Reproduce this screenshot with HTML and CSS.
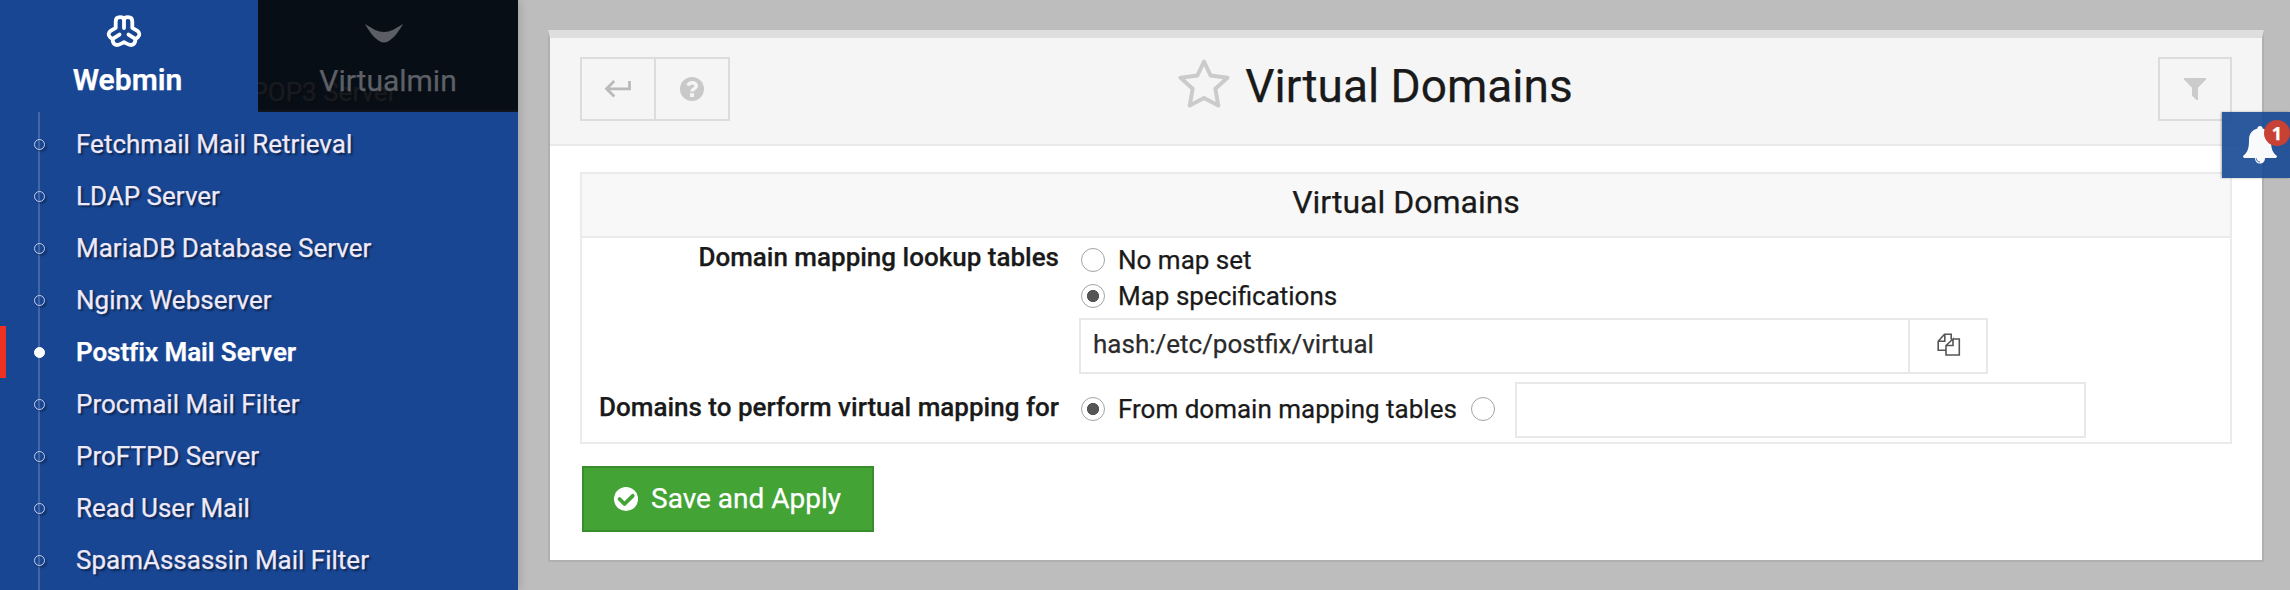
FILE: index.html
```html
<!DOCTYPE html>
<html lang="en">
<head>
<meta charset="utf-8">
<title>Virtual Domains</title>
<link rel="stylesheet" href="styles.css">
</head>
<body>
<div class="app">
  <aside class="sidebar">
    <nav class="tabs">
      <a class="tab tab-active">
        <svg class="tab-icon" width="36" height="34" viewBox="0 0 36 34" fill="none" stroke="#fff" stroke-width="3.8" stroke-linecap="round" stroke-linejoin="round">
          <path d="M18 14V6.500C18 4 16 3.200 14 3.200C11 3.200 9.700 4.800 9.700 7.500V13.800L4.600 16.800C2.200 18.400 2 21.500 4.100 23.200C5.100 24 6.200 24.200 6.500 25.500C6.800 28.500 7.500 30.700 10.800 31C13 31.100 15.500 29.500 18 28.200C20.500 29.500 23 31.100 25.200 31C28.500 30.700 29.200 28.500 29.500 25.500C29.800 24.200 30.900 24 31.900 23.200C34 21.500 33.800 18.400 31.400 16.800L26.300 13.800V7.500C26.300 4.800 25 3.200 22 3.200C20 3.200 18 4 18 6.500"/>
          <path d="M13.500 20.600L7.500 24.300M22.500 20.600L28.500 24.300"/>
        </svg>
        <span>Webmin</span>
      </a>
      <a class="tab tab-dim">
        <svg class="tab-icon" width="38" height="34" viewBox="0 0 38 34" fill="#5b5e64">
          <path d="M0 10C8 15 13 18 19 18C25 18 30 15 38 10C33.500 18 29 24 23.500 27.200C20.500 28.900 17.500 28.900 14.500 27.200C9 24 4.500 18 0 10Z"/>
        </svg>
        <span>Virtualmin</span>
      </a>
    </nav>
    <ul class="menu">
      <li class="item"><i class="dot"></i>Dovecot IMAP/POP3 Server</li>
      <li class="item"><i class="dot"></i>Fetchmail Mail Retrieval</li>
      <li class="item"><i class="dot"></i>LDAP Server</li>
      <li class="item"><i class="dot"></i>MariaDB Database Server</li>
      <li class="item"><i class="dot"></i>Nginx Webserver</li>
      <li class="item item-active"><i class="dot"></i>Postfix Mail Server</li>
      <li class="item"><i class="dot"></i>Procmail Mail Filter</li>
      <li class="item"><i class="dot"></i>ProFTPD Server</li>
      <li class="item"><i class="dot"></i>Read User Mail</li>
      <li class="item"><i class="dot"></i>SpamAssassin Mail Filter</li>
    </ul>
  </aside>

  <main class="content">
    <section class="panel">
      <header class="panel-head">
        <div class="tools">
          <button class="tool" aria-label="Return">
            <svg width="28" height="18" viewBox="0 0 28 18" fill="none" stroke="#bababa" stroke-width="2.8"><path d="M25.500 1V8.800H3M10.300 1L2.500 8.800L10.300 16.600"/></svg>
          </button>
          <button class="tool" aria-label="Help">
            <svg width="24" height="24" viewBox="0 0 24 24"><circle cx="12" cy="12" r="12" fill="#c9c9c9"/><path d="M7.800 8.500C8.700 6.400 10.200 5.700 12.200 5.700C14.500 5.700 16.300 7 16.300 9C16.300 12 12 11.600 12 14.600" fill="none" stroke="#f5f5f5" stroke-width="3.5"/><rect x="10" y="16.200" width="4" height="3.800" fill="#f5f5f5"/></svg>
          </button>
        </div>
        <h1 class="title">
          <svg width="52" height="51" viewBox="0 0 52 51" fill="none" stroke="#cbcbcb" stroke-width="4" stroke-linejoin="round"><path d="M26 3.500L32.600 17.500L49.500 19.700L37.300 30.700L40.300 47.500L26 39.900L11.700 47.500L14.700 30.700L2.500 19.700L19.400 17.500Z"/></svg>
          <span>Virtual Domains</span>
        </h1>
        <button class="tool" aria-label="Filter">
          <svg width="22" height="22" viewBox="0 0 22 22" fill="#cbcbcb"><path d="M0 0H22V1.500L14 9.800V22H12.500L8 17.800V9.800L0 1.500Z"/></svg>
        </button>
      </header>

      <div class="panel-body">
        <div class="box">
          <h2 class="box-head">Virtual Domains</h2>
          <div class="row row-tables">
            <div class="label">Domain mapping lookup tables</div>
            <div class="field">
              <label class="option"><i class="radio"></i>No map set</label>
              <label class="option"><i class="radio radio-on"></i>Map specifications</label>
              <div class="input-group">
                <div class="input input-map">hash:/etc/postfix/virtual</div>
                <button class="copy" aria-label="Choose map">
                  <svg width="24" height="24" viewBox="0 0 24 24" fill="none" stroke="#555" stroke-width="1.600"><path d="M9 17.300H1.200V8.200L7.500 1.200H14.200V6.500M7.800 1.500V8.200H1.500M16 6H22.300V22H9V12.500L16 6V12.500H9"/></svg>
                </button>
              </div>
            </div>
          </div>
          <div class="row row-domains">
            <div class="label">Domains to perform virtual mapping for</div>
            <div class="field field-inline">
              <label class="option"><i class="radio radio-on"></i>From domain mapping tables</label>
              <i class="radio"></i>
              <div class="input input-domains"></div>
            </div>
          </div>
        </div>
        <button class="save">
          <svg width="24" height="24" viewBox="0 0 24 24"><circle cx="12" cy="12" r="12" fill="#fff"/><path d="M5.500 12L10.500 17L18.700 8.800" fill="none" stroke="#43a335" stroke-width="3.800" stroke-linecap="round" stroke-linejoin="round"/></svg>
          <span>Save and Apply</span>
        </button>
      </div>
    </section>
  </main>

  <div class="notify">
    <svg class="bell" width="34" height="38" viewBox="0 0 34 38"><path fill="#fff" fill-opacity=".97" d="M17 0C18.600 0 19.600 1 19.600 2.600C25 4 28 8 28 14C28 23 29.500 26.500 34 30C34 31.500 33 32 32 32H22C22 35.500 20 37.500 17 37.500C14 37.500 12 35.500 12 32H2C1 32 0 31.500 0 30C4.500 26.500 6 23 6 14C6 8 9 4 14.400 2.600C14.400 1 15.400 0 17 0Z"/><path d="M13.300 32.300C13.500 34.500 14.800 35.900 17 36" fill="none" stroke="#2b579c" stroke-width=".9"/></svg>
    <span class="badge">1</span>
  </div>
</div>
</body>
</html>
```
FILE: styles.css
```css
* {
  box-sizing: border-box;
}

body {
  margin: 0;
  background: #bdbdbd;
  color: #1a1a1a;
  font-family: Roboto, "Liberation Sans", sans-serif;
  font-size: 26px;
  -webkit-text-stroke: 0.25px currentColor;
}

button {
  margin: 0;
  padding: 0;
  border: 0;
  border-radius: 0;
  background: transparent;
  font: inherit;
}

svg {
  display: block;
  flex: none;
}

.app {
  position: relative;
  display: flex;
  width: 2290px;
  height: 590px;
  overflow: hidden;
}

/* Sidebar */
.sidebar {
  position: relative;
  flex: none;
  width: 518px;
  background: #184693;
  box-shadow: 2px 0 8px rgba(0, 0, 0, 0.14);
}

.tabs {
  position: absolute;
  top: 0;
  left: 0;
  z-index: 2;
  display: flex;
  width: 518px;
  height: 112px;
}

.tab {
  display: flex;
  flex-direction: column;
  align-items: center;
  gap: 14px;
  padding-top: 14px;
  font-size: 30px;
  line-height: 36px;
}

.tab-active {
  width: 258px;
  padding-right: 3px;
  background: #184693;
  color: #fff;
  font-weight: 600;
}

.tab-active .tab-icon {
  margin-left: -7px;
}

.tab-dim {
  width: 260px;
  background: rgba(8, 10, 13, 0.93);
  border-bottom: 2px solid #10141c;
  color: #5d6066;
}

.tab-dim span {
  padding-top: 1px;
}

.tab-dim .tab-icon {
  margin-right: 9px;
}

.menu {
  height: 590px;
  margin: 0;
  padding: 66px 0 0;
  overflow: hidden;
  list-style: none;
  background: linear-gradient(#4566a5, #4566a5) 38px 0 / 2px 100% no-repeat;
}

.item {
  display: flex;
  align-items: center;
  height: 52px;
  padding-left: 34px;
  line-height: 52px;
  color: #efeafa;
  text-shadow: 2px 2px 2px rgba(0, 0, 0, 0.5);
}

.dot {
  width: 11px;
  height: 11px;
  margin-right: 31px;
  border: 1.5px solid #c3cce8;
  border-radius: 50%;
  box-shadow: 2px 2px 2px rgba(0, 0, 0, 0.25);
}

.item-active {
  padding-left: 28px;
  border-left: 6px solid #ef3124;
  color: #fff;
  font-weight: 600;
  letter-spacing: -0.06px;
  text-shadow: none;
}

.item-active .dot {
  border-color: #fff;
  background: #fff;
  box-shadow: none;
}

/* Main panel */
.content {
  flex: 1;
  padding: 30px 26px 0 30px;
}

.panel {
  height: 532px;
  border: 2px solid #b0b0b0;
  border-top: 8px solid #dedede;
  background: #fff;
}

.panel-head {
  display: flex;
  align-items: flex-start;
  height: 108px;
  padding: 19px 30px 0;
  border-bottom: 2px solid #e9e9e9;
  background: #f5f5f5;
}

.tools {
  display: flex;
  width: 150px;
}

.tool {
  display: flex;
  align-items: center;
  justify-content: center;
  width: 76px;
  height: 64px;
  border: 2px solid #dcdcdc;
}

.tool + .tool {
  margin-left: -2px;
}

.title {
  display: flex;
  flex: 1;
  align-items: center;
  justify-content: center;
  gap: 15px;
  margin: 0;
  padding-right: 137px;
  font-size: 46px;
  font-weight: 400;
  line-height: 59px;
}

.title svg {
  margin-bottom: 7px;
}

.title + .tool {
  width: 74px;
}

.panel-body {
  padding: 26px 30px 0;
}

.box {
  height: 272px;
  border: 2px solid #ebebeb;
}

.box-head {
  height: 64px;
  margin: 0;
  border-bottom: 2px solid #ebebeb;
  background: #f8f8f8;
  font-size: 32px;
  font-weight: 400;
  line-height: 56px;
  text-align: center;
}

.row {
  display: grid;
  grid-template-columns: 477px 1fr;
  column-gap: 20px;
}

.label {
  padding-top: 1px;
  font-weight: 500;
  line-height: 36px;
  text-align: right;
}

.row-tables .field {
  padding-top: 4px;
}

.row-domains {
  margin-top: 8px;
}

.row-domains .label {
  padding-top: 7px;
}

.option {
  display: flex;
  align-items: center;
  line-height: 36px;
}

.radio {
  flex: none;
  width: 24px;
  height: 24px;
  margin: 0 13px 0 2px;
  border: 1px solid #a3a3a3;
  border-radius: 50%;
  background: #fff;
}

.radio-on {
  background: radial-gradient(circle, #555 5.7px, #fff 6.4px);
}

.input-group {
  display: flex;
  margin-top: 4px;
}

.input {
  height: 56px;
  border: 2px solid #e8e8e8;
  background: #fff;
  color: #2b2b2b;
  line-height: 48px;
}

.input-map {
  width: 831px;
  padding-left: 12px;
}

.copy {
  display: flex;
  align-items: center;
  justify-content: center;
  width: 80px;
  height: 56px;
  margin-left: -2px;
  padding: 0 0 2px 2px;
  border: 2px solid #e8e8e8;
}

.field-inline {
  display: flex;
  align-items: center;
}

.field-inline .option {
  margin-top: -2px;
}

.field-inline > .radio {
  margin: -2px 20px 0 14px;
}

.input-domains {
  width: 571px;
}

.save {
  display: flex;
  align-items: center;
  gap: 13px;
  width: 292px;
  height: 66px;
  margin: 22px 0 0 2px;
  padding: 0 0 1px 30px;
  border: 2px solid #388e2d;
  background: #43a335;
  color: #fff;
  font-size: 28px;
}

/* Notification handle */
.notify {
  position: absolute;
  top: 112px;
  right: 0;
  width: 68px;
  height: 66px;
  padding: 14px 0 0 21px;
  background: rgba(24, 72, 148, 0.91);
  box-shadow: -1px 0 2px rgba(0, 0, 0, 0.3);
}

.badge {
  position: absolute;
  top: 8px;
  right: 0;
  width: 26px;
  height: 26px;
  border-radius: 50%;
  background: #c74135;
  color: #fff;
  font: 700 18px/26px "Open Sans", sans-serif;
  text-align: center;
}
```
